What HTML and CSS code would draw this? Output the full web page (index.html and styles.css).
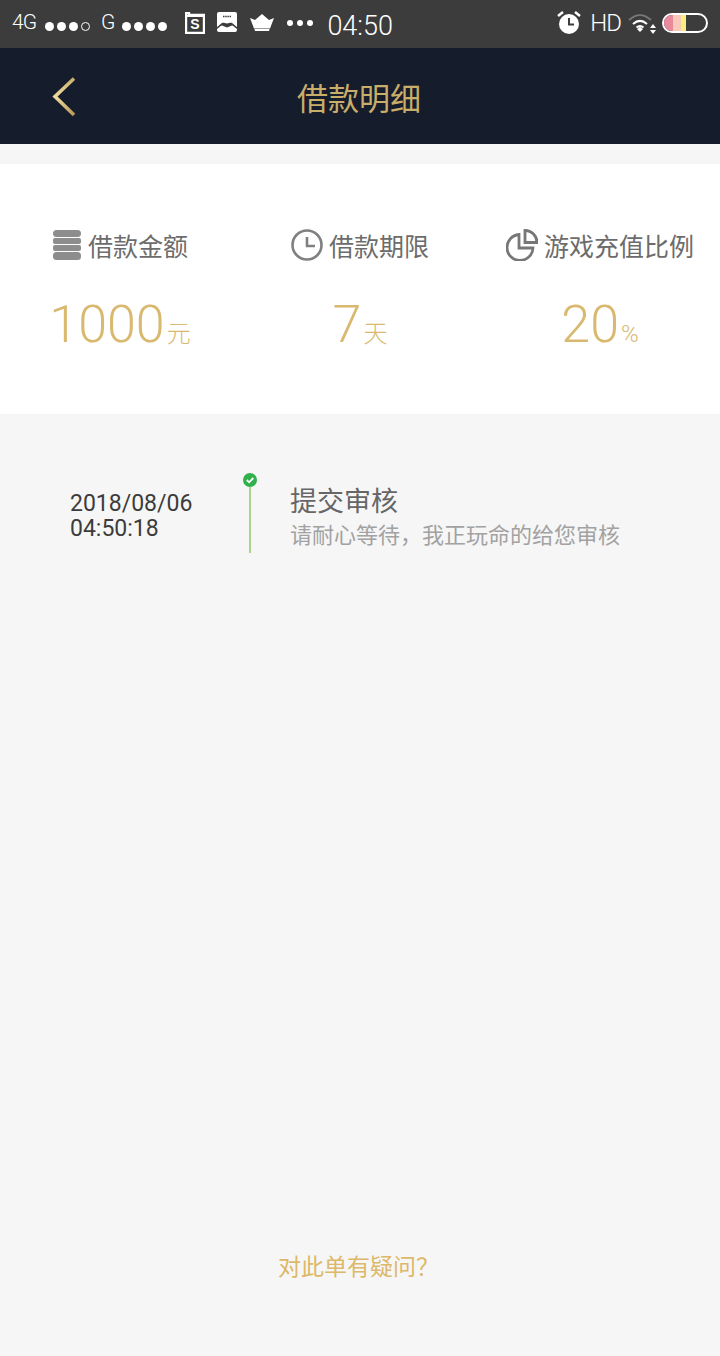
FILE: index.html
```html
<!DOCTYPE html>
<html lang="zh-CN">
<head>
<meta charset="utf-8">
<title>借款明细</title>
<link rel="stylesheet" href="styles.css">
</head>
<body>
<div class="page">
  <div class="statusbar">
    <div class="sb-left">
      <span class="sb-net">4G</span>
      <span class="dots"><i></i><i></i><i></i><i class="hollow"></i></span>
      <span class="sb-net g">G</span>
      <span class="dots"><i></i><i></i><i></i><i></i></span>
      <svg class="ic-s" width="20" height="22" viewBox="0 0 20 22"><path d="M1 1h3v2h15v18H1z" fill="none" stroke="#fff" stroke-width="2.4"/><rect x="2" y="3" width="16" height="2" fill="#fff"/><text x="10" y="17" text-anchor="middle" class="ic-s-text">S</text></svg>
      <svg class="ic-v" width="20" height="20" viewBox="0 0 20 20"><path d="M2 0h16a2 2 0 0 1 2 2v13c-2-1-3-3-5-4-2-.5-3 .5-5 .5S7 10.500 5 11c-2 1-3 3-5 4V2a2 2 0 0 1 2-2z" fill="#fff"/><path d="M0 17c2-1 3-3 5-3.500l5 2 5-2c2 .5 3 2.500 5 3.500v1a2 2 0 0 1-2 2H2a2 2 0 0 1-2-2z" fill="#fff"/><path d="M6 4.500h8" stroke="#3c3c3c" stroke-width="1.400" stroke-dasharray="1.500 .7"/></svg>
      <svg class="ic-c" width="24" height="17" viewBox="0 0 24 17"><path d="M0 4l5 2 7-6 7 6 5-2-4 10.500H4zM4.500 15h15l-.5 2H5z" fill="#fff"/></svg>
      <span class="dots small"><i></i><i></i><i></i></span>
      <span class="sb-time">04:50</span>
    </div>
    <div class="sb-right">
      <svg width="24" height="23" viewBox="0 0 24 23"><circle cx="12" cy="13" r="10" fill="#fff"/><path d="M12 7v6.500h5" fill="none" stroke="#3c3c3c" stroke-width="2"/><path d="M1 5l5-4M23 5l-5-4" stroke="#fff" stroke-width="2.500"/></svg>
      <span class="sb-hd">HD</span>
      <svg width="30" height="22" viewBox="0 0 30 22"><path d="M1 7c7-6.500 15-6.500 22 0" fill="none" stroke="#777" stroke-width="2"/><path d="M5 11c4.500-4 9.500-4 14 0M8.500 14.500c2.500-2 4.500-2 7 0" fill="none" stroke="#fff" stroke-width="2"/><path d="M9 16l3-2 3 2-3 3z" fill="#fff"/><path d="M25 11l3 4h-6zM25 21l3-4h-6z" fill="#fff"/></svg>
      <div class="battery"><i class="b1"></i><i class="b2"></i><i class="b3"></i></div>
    </div>
  </div>
  <header class="nav">
    <svg class="back" width="26" height="42" viewBox="0 0 26 42"><defs><linearGradient id="g" x1="0" y1="0" x2="0" y2="1"><stop offset="0" stop-color="#c8b069"/><stop offset=".5" stop-color="#efdc9f"/><stop offset="1" stop-color="#b79a55"/></linearGradient></defs><path d="M23 2.500L4 20.500l19 18.500" fill="none" stroke="url(#g)" stroke-width="3.600"/></svg>
    <h1 class="nav-title">借款明细</h1>
  </header>
  <section class="summary">
    <div class="col">
      <div class="label">
        <svg width="30" height="32" viewBox="0 0 30 32"><g fill="#8d8d8d"><rect x="1" y="1" width="28" height="7" rx="3.500"/><rect x="1" y="9" width="28" height="6" rx="2"/><rect x="1" y="16" width="28" height="6" rx="2"/><rect x="1" y="23" width="28" height="8" rx="3.500"/></g></svg>
        <span>借款金额</span>
      </div>
      <div class="val"><span class="num">1000</span><span class="unit">元</span></div>
    </div>
    <div class="col">
      <div class="label">
        <svg width="32" height="32" viewBox="0 0 32 32"><circle cx="16" cy="16" r="14.500" fill="none" stroke="#808080" stroke-width="2.600"/><path d="M16 8v9h8" fill="none" stroke="#808080" stroke-width="2.600"/></svg>
        <span>借款期限</span>
      </div>
      <div class="val"><span class="num">7</span><span class="unit">天</span></div>
    </div>
    <div class="col">
      <div class="label">
        <svg width="32" height="32" viewBox="0 0 32 32"><path d="M13 5.500A13 13 0 1 0 27 19H13z" fill="none" stroke="#777" stroke-width="2.800"/><path d="M19 1.500A12 12 0 0 1 31 13.500H19z" fill="none" stroke="#777" stroke-width="2.800"/></svg>
        <span>游戏充值比例</span>
      </div>
      <div class="val"><span class="num">20</span><span class="unit pct">%</span></div>
    </div>
  </section>
  <main class="body">
    <div class="step">
      <div class="step-time">2018/08/06<br>04:50:18</div>
      <div class="rail">
        <svg width="14" height="14" viewBox="0 0 14 14"><circle cx="7" cy="7" r="7" fill="#2fb14b"/><path d="M3.800 7l2.300 2.300 4.200-4.300" fill="none" stroke="#fff" stroke-width="1.800"/></svg>
        <div class="rail-line"></div>
      </div>
      <div class="step-text">
        <div class="step-title">提交审核</div>
        <div class="step-desc">请耐心等待，我正玩命的给您审核</div>
      </div>
    </div>
    <div class="help">对此单有疑问？</div>
  </main>
</div>
</body>
</html>
```

FILE: styles.css
```css
* { box-sizing: border-box; margin: 0; padding: 0; }
html, body { background: #f6f6f6; }
body { width: 720px; height: 1356px; overflow: hidden; font-family: "Noto Sans CJK SC", sans-serif; }
.page { display: flex; flex-direction: column; height: 1356px; }

.statusbar { height: 48px; background: #3c3c3c; color: #fff; display: flex; justify-content: space-between; align-items: center; padding: 0 12px; font-family: Roboto, "Liberation Sans", sans-serif; }
.sb-left, .sb-right { display: flex; align-items: center; }
.sb-net { font-size: 21px; font-weight: 300; letter-spacing: -1px; margin-top: -4px; width: 33px; }
.sb-net.g { width: auto; margin-left: 11px; margin-right: 8px; }
.dots { display: flex; gap: 3px; align-items: center; margin-top: 4px; }
.dots i { width: 9px; height: 9px; border-radius: 50%; background: #fff; display: block; }
.dots i.hollow { background: none; border: 1px solid #fff; }
.dots.small { gap: 4px; margin: -2px 0 0 13px; }
.dots.small i { width: 6px; height: 6px; }
.ic-s { margin-left: 18px; margin-top: -2px; }
.ic-s-text { font: 700 14px "Liberation Sans", sans-serif; fill: #fff; }
.ic-v { margin-left: 12px; margin-top: -4px; }
.ic-c { margin-left: 13px; margin-top: -3px; }
.sb-time { font-size: 27px; font-weight: 300; margin-left: 14px; margin-top: 3px; }
.sb-right { padding-right: 0; }
.sb-right svg:first-child { margin-top: -4px; }
.sb-hd { font-size: 24px; font-weight: 300; letter-spacing: -1px; margin: -3px 7px 0 9px; }
.battery { width: 46px; height: 20px; border: 2px solid #fff; border-radius: 10px; display: flex; overflow: hidden; margin-left: 4px; margin-top: -2px; }
.battery i { display: block; height: 100%; }
.b1 { width: 9px; background: #e88a9c; }
.b2 { width: 8px; background: #f8c8b8; }
.b3 { width: 5px; background: #faef7c; }

.nav { height: 96px; background: #151c2c; display: flex; align-items: center; justify-content: center; position: relative; }
.back { position: absolute; left: 51px; top: 28px; }
.nav-title { font-size: 31px; font-weight: 400; color: #c9ae69; line-height: 1; margin-left: -2px; }

.summary { margin-top: 20px; height: 250px; background: #fff; display: grid; grid-template-columns: 240px 240px 240px; }
.col { display: flex; flex-direction: column; align-items: center; padding-top: 63px; }
.label { display: flex; align-items: center; gap: 6px; height: 36px; font-size: 25px; color: #6c6c6c; white-space: nowrap; }
.val { display: flex; align-items: baseline; color: #d9b970; margin-top: 32px; font-family: Roboto, sans-serif; }
.num { font-size: 52px; font-weight: 300; line-height: 60px; }
.unit { font-size: 24px; font-weight: 300; font-family: "Noto Sans CJK SC", sans-serif; margin-left: 2px; }
.unit.pct { font-family: Roboto, sans-serif; }

.body { flex: 1; position: relative; display: flex; flex-direction: column; justify-content: space-between; padding: 59px 0 76px; }
.step { display: flex; height: 80px; padding-left: 70px; }
.step-time { width: 173px; padding-top: 18px; font-family: Roboto, sans-serif; font-size: 23px; line-height: 25px; color: #3c3c3c; font-weight: 400; }
.rail { width: 14px; display: flex; flex-direction: column; align-items: center; }
.rail-line { width: 2px; flex: 1; background: #a8d78a; }
.step-text { margin-left: 33px; padding-top: 9px; }
.step-title { font-size: 27px; line-height: 36px; color: #666; }
.step-desc { font-size: 22px; line-height: 30px; color: #a2a2a2; white-space: nowrap; }
.help { text-align: center; font-size: 23px; line-height: 30px; color: #dcb868; margin-left: -3px; }
```
